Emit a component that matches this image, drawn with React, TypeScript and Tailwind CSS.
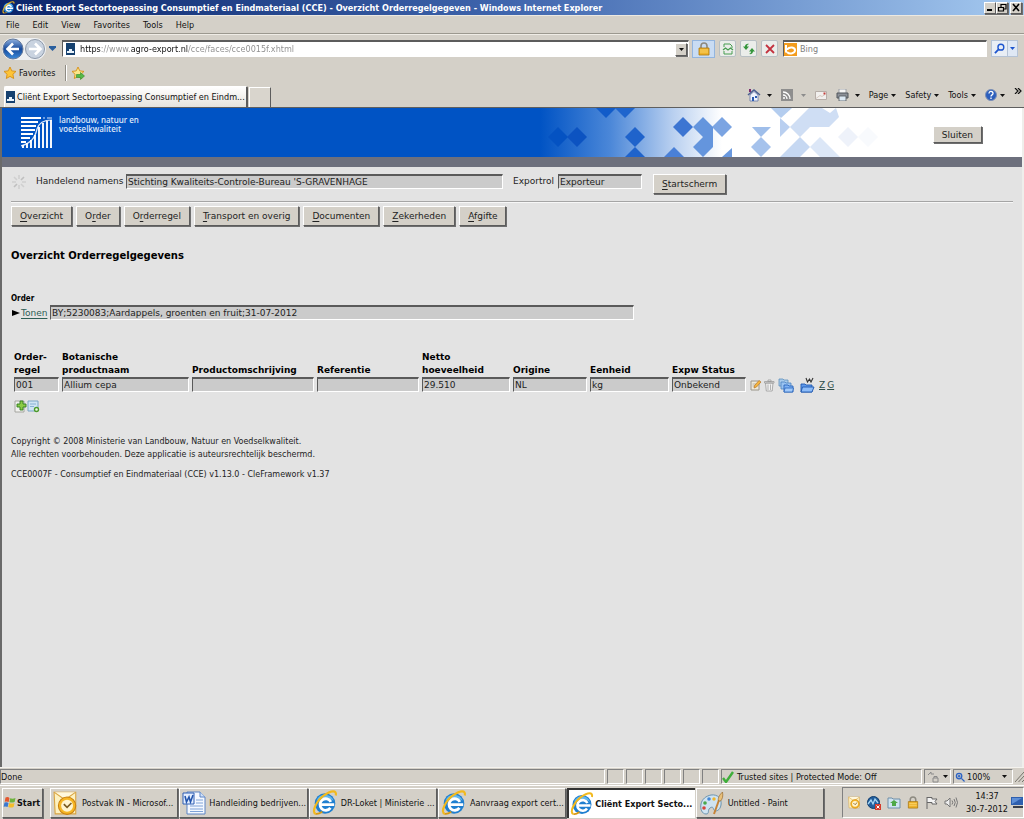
import * as React from "react"
import { clsx } from "clsx"

const raised =
  "border border-t-white border-l-white border-r-[#5c5c5c] border-b-[#5c5c5c] bg-[#d4d0c8] shadow-[1px_1px_0_#6e6e6e]"
const sunken = "border border-t-[#808080] border-l-[#808080] border-r-white border-b-white"

/* ---------- small drawings ---------- */

function IeLogo({ className }: { className?: string }) {
  return (
    <svg viewBox="0 0 24 24" className={className} aria-hidden="true">
      <circle cx="12" cy="12.5" r="9.5" fill="#1f7fd0" />
      <path d="M4 10a8.5 8.5 0 0 1 16 0c-4-3-11-4-16 0z" fill="#62b8ee" />
      <path d="M7.5 13.5h13M17 16.5a5.3 5.3 0 1 1 .4-5.5" fill="none" stroke="#fff" strokeWidth="2.6" />
      <path d="M3.5 22C-1 21 4 10 11 5S23 0 22 5" fill="none" stroke="#f2b91d" strokeWidth="2" />
      <path d="M3.5 22c2 .6 4-.6 6-2" fill="none" stroke="#d99a12" strokeWidth="1.6" />
    </svg>
  )
}

function SiteIcon() {
  return (
    <svg viewBox="0 0 9 12" className="h-3 w-[9px] shrink-0" aria-hidden="true">
      <path d="M0 0h9v12H0z" fill="#16416f" />
      <path d="M3 6h3v2h2v2H1V8h2z" fill="#e8f2fb" />
    </svg>
  )
}

function Star({ add }: { add?: boolean }) {
  return (
    <svg viewBox="0 0 14 14" className="h-[14px] w-[14px] shrink-0" aria-hidden="true">
      <path
        d="M7 1l1.8 3.9 4.2.5-3.1 2.9.8 4.2L7 10.4l-3.7 2.1.8-4.2L1 5.4l4.2-.5z"
        fill={add ? "#fbe68a" : "#fdc437"}
        stroke="#d78f14"
        strokeWidth=".9"
      />
      {add && <path d="M5.5 8.500h4V6.500L13.500 10 9.500 13.500v-2h-4z" fill="#55b948" stroke="#2f8a2a" strokeWidth=".6" />}
    </svg>
  )
}

function Caret({ className }: { className?: string }) {
  return (
    <svg viewBox="0 0 5 3" className={clsx("h-[3px] w-[5px] shrink-0", className)} aria-hidden="true">
      <path d="M0 0h5L2.500 3z" fill="currentColor" />
    </svg>
  )
}

function Lock({ className }: { className?: string }) {
  return (
    <svg viewBox="0 0 12 14" className={className} aria-hidden="true">
      <path d="M3 7V4a3 3 0 0 1 6 0v3" fill="none" stroke="#8d8a80" strokeWidth="1.600" />
      <path d="M1 6h10v7H1z" fill="#eeb32d" stroke="#a9770f" strokeWidth=".8" />
      <path d="M2 8h8M2 10h8" stroke="#fbd977" strokeWidth=".8" />
    </svg>
  )
}

function OrangeClock({ className }: { className?: string }) {
  return (
    <svg viewBox="0 0 24 24" className={className} aria-hidden="true">
      <path d="M1 2h20v20H2z" fill="#fdf1c0" stroke="#d9a441" />
      <path d="M1 2l10 7L21 2" fill="#fff8de" stroke="#d9a441" />
      <circle cx="13" cy="14.500" r="8" fill="#f6b625" stroke="#c9800f" />
      <circle cx="13" cy="14.500" r="5.500" fill="#fff4cf" />
      <path d="M10 13l3 3 4-4" fill="none" stroke="#7a5a20" strokeWidth="1.500" />
    </svg>
  )
}

function WordIcon() {
  return (
    <svg viewBox="0 0 24 24" className="h-6 w-6 shrink-0" aria-hidden="true">
      <path d="M5 1h13l5 5v17H5z" fill="#f4f8ff" stroke="#5c84c4" />
      <path d="M18 1v5h5" fill="#cfe0f8" stroke="#5c84c4" />
      <path d="M14 9h7M14 12h7M8 15h13M8 18h13M8 20.500h13" stroke="#7ea2d8" strokeWidth="1.200" />
      <path d="M1 2h11v11H1z" fill="#e5efff" stroke="#2f5fb3" />
      <path d="M3 5l1.500 6L7 6l1.500 5L11 4" fill="none" stroke="#2456ad" strokeWidth="1.600" />
    </svg>
  )
}

function PaintIcon() {
  return (
    <svg viewBox="0 0 26 26" className="h-[26px] w-[26px] shrink-0" aria-hidden="true">
      <path
        d="M12 5c7-1 11 4 10 10s-6 7-7 5-1-4-4-2 0 6-4 6S1 19 2 14s5-8 10-9z"
        fill="#cfe3f1"
        stroke="#6b93ae"
      />
      <circle cx="6" cy="13" r="1.800" fill="#4aa84a" />
      <circle cx="10" cy="9" r="1.800" fill="#4388d6" />
      <circle cx="15" cy="9" r="1.700" fill="#efb62c" />
      <circle cx="5" cy="18" r="1.800" fill="#d8453b" />
      <path d="M15 24l5-14" stroke="#c78337" strokeWidth="2" />
      <path d="M19.500 11c-1-3 1-6 4-9 .8 4 0 7-2 9z" fill="#e8c07a" stroke="#9a6a2d" strokeWidth=".7" />
    </svg>
  )
}

function WindowsFlag() {
  return (
    <svg viewBox="0 0 13 13" className="h-[13px] w-[13px] shrink-0" aria-hidden="true">
      <path d="M2.500 1.500Q5 .5 6.500 2L5.700 6Q4 5 1.700 5.700z" fill="#e4572e" />
      <path d="M7.200 2.200Q9.500 3.200 12.500 2l-.9 4Q9 7 6.400 6.200z" fill="#6fb33d" />
      <path d="M1.500 6.500Q4 5.600 5.500 7l-.9 4Q3 10 .6 10.700z" fill="#3b78cf" />
      <path d="M6.200 7Q9 8 11.500 7l-.9 4Q8 12 5.300 11z" fill="#f4bd2b" />
    </svg>
  )
}

function Folder({ variant }: { variant: "stack" | "word" }) {
  return (
    <svg viewBox="0 0 16 16" className="h-4 w-4" aria-hidden="true">
      {variant === "stack" ? (
        <>
          <path d="M1 2h4l1 1h4v6H1z" fill="#a9cbec" stroke="#5d8fbd" strokeWidth=".8" />
          <path d="M3 5h4l1 1h5v6H3z" fill="#9ac3f1" stroke="#4c83c0" strokeWidth=".8" />
          <path d="M6 8h4l1 1h4v6H6z" fill="#7eb2f4" stroke="#2a64bb" strokeWidth=".9" />
          <path d="M6 15l1-4h8.500l-1 4z" fill="#a2cafa" stroke="#2a64bb" strokeWidth=".8" />
        </>
      ) : (
        <>
          <path d="M2 7h4l1 1h6v7H2z" fill="#5f9aec" stroke="#1e57b0" strokeWidth=".9" />
          <path d="M2 15l1.500-5H15l-2 5z" fill="#8dbcf8" stroke="#1e57b0" strokeWidth=".9" />
          <path d="M7 1l1.500 4L10.500 2l1.500 3L14 1" fill="none" stroke="#333" strokeWidth="1.100" />
        </>
      )}
    </svg>
  )
}

function MinistryLogo() {
  const bars = [[2, 28], [6, 26], [10, 23], [14, 18], [18, 10], [22, 6], [26, 4], [30, 3]]
  return (
    <svg viewBox="0 0 31 31" className="mt-[9px] h-[31px] w-[31px] shrink-0" aria-hidden="true">
      <path
        d="M0 1h20M0 5h17M0 9h15M0 13h14M0 17h12M0 21h9M0 25h5"
        stroke="#fff"
        strokeWidth="1.800"
      />
      <path d="M0 29C10 26 14 21 16 12 18 5 23 3 31 3M22 1h2M26 1h5" fill="none" stroke="#dce8f8" strokeWidth="1.200" />
      {bars.map(([x, y]) => (
        <path key={x} d={`M${x} ${y}V31`} stroke="#fff" strokeWidth="1.900" />
      ))}
    </svg>
  )
}

function Mosaic() {
  const diamonds: [number, number, string][] = [
    [18, 29, "#0452c2"],
    [37, 29, "#0c53c1"],
    [66, 0, "#125cc9"],
    [85, 0, "#1f65cd"],
    [95, 29, "#1f63cb"],
    [95, 49, "#1f63cb"],
    [134, 49, "#4a80d7"],
    [143, 19, "#3c75d2"],
    [182, 19, "#7ba4e2"],
    [221, 39, "#a5c2ec"],
    [308, 29, "#eef2fa"],
    [328, 29, "#f8fafd"],
  ]
  return (
    <svg viewBox="0 0 350 49" className="h-[49px] w-[350px] shrink-0" aria-hidden="true">
      <defs>
        <linearGradient id="fade" x1="0" x2="1">
          <stop offset="0" stopColor="#0053c4" />
          <stop offset=".2" stopColor="#4b87d8" />
          <stop offset=".38" stopColor="#b9d0f0" />
          <stop offset=".52" stopColor="#fff" />
        </linearGradient>
      </defs>
      <path d="M0 0h350v49H0z" fill="url(#fade)" />
      {diamonds.map(([x, y, fill]) => (
        <path key={`${x}-${y}`} d={`M${x - 10} ${y}l10-10 10 10-10 10z`} fill={fill} />
      ))}
      <path d="M153 19l10-10 10 10v20l-10 10-10-10 10-10z" fill="#6495dd" />
      <path d="M182 49l10-9v9z" fill="#6a99df" />
      <path d="M212 19h19l-10 10z" fill="#9fbeea" />
      <path d="M231 0h21l-11 10z" fill="#b4cdef" />
      <path d="M240 10l10 9-10 10z" fill="#b9cff0" />
      <path d="M250 19L269 0h13l8 5 6-5 3 9-10 10h-19l-10 10z" fill="#cfdef4" />
      <path d="M240 49l20-20 10 10-10 10z" fill="#c6d8f2" />
      <path d="M270 39l10-10 20 20h-20z" fill="#dce7f7" />
    </svg>
  )
}

/* ---------- browser window ---------- */

function TitleBar() {
  const controls = [
    { label: "Minimize", d: "M2 7h5", w: 2 },
    { label: "Restore", d: "M4 4V1.500h5V6H7M1.500 4.500h5V8h-5z", w: 1.2 },
    { label: "Close", d: "M2 1l6 7M8 1L2 8", w: 1.6 },
  ]
  return (
    <header className="flex h-[15px] items-center bg-linear-to-r from-[#0a246a] via-[#4066ae] to-[#a6caf0] pl-[2px] text-white">
      <IeLogo className="h-[13px] w-[13px]" />
      <h1 className="ml-px flex-1 truncate font-bold">
        Cliënt Export Sectortoepassing Consumptief en Eindmateriaal (CCE) - Overzicht Orderregelgegeven - Windows Internet Explorer
      </h1>
      {controls.map((c) => (
        <button key={c.label} aria-label={c.label} className={clsx("flex h-3 w-3 items-center justify-center last:mr-[2px] last:ml-[2px]", raised)}>
          <svg viewBox="0 0 10 10" className="h-[10px] w-[10px]">
            <path d={c.d} fill="none" stroke="#000" strokeWidth={c.w} />
          </svg>
        </button>
      ))}
    </header>
  )
}

function MenuBar() {
  return (
    <nav className="flex h-[19px] items-center gap-[13px] border-t border-b border-t-[#ece9e2] border-b-[#9b988f] pt-px pl-[6px]">
      {["File", "Edit", "View", "Favorites", "Tools", "Help"].map((m) => (
        <button key={m}>{m}</button>
      ))}
    </nav>
  )
}

const toolButton = "flex h-[17px] w-[17px] items-center justify-center rounded-xs border border-[#b8c0c4] bg-[#ebedea]"

function AddressBar() {
  return (
    <div className="flex h-7 items-center border-t border-t-[#efece6] pr-[6px] pl-[2px]">
      <div className="flex rounded-full bg-[#eef0f2]">
        <button aria-label="Back">
          <svg viewBox="0 0 22 22" className="h-[22px] w-[22px]">
            <defs>
              <linearGradient id="back" x2="0" y2="1">
                <stop offset="0" stopColor="#8fb0df" />
                <stop offset=".5" stopColor="#174a9b" />
                <stop offset="1" stopColor="#3a8bdc" />
              </linearGradient>
            </defs>
            <circle cx="11" cy="11" r="10" fill="url(#back)" stroke="#63789a" />
            <path d="M17 11H6M11 5.500L5.500 11l5.500 5.500" fill="none" stroke="#fff" strokeWidth="2.600" />
          </svg>
        </button>
        <button aria-label="Forward">
          <svg viewBox="0 0 22 22" className="h-[22px] w-[22px]">
            <circle cx="11" cy="11" r="9.500" fill="#c9d3e0" stroke="#8d99aa" />
            <path d="M5 11h11M11 5.500l5.500 5.500-5.500 5.500" fill="none" stroke="#fff" strokeWidth="2.600" />
          </svg>
        </button>
      </div>
      <button aria-label="Recent pages" className="ml-[3px] flex text-[#2a5f9e]">
        <svg viewBox="0 0 7 5" className="h-[5px] w-[7px]">
          <path d="M0 0h7v1.500L3.500 5 0 1.500z" fill="currentColor" />
        </svg>
      </button>
      <div className="ml-[6px] flex h-[17px] min-w-0 flex-1 items-center border border-t-2 border-t-[#5c5c5c] border-r-white border-b-white border-l-[#5c5c5c] bg-white pl-[3px]">
        <SiteIcon />
        <input
          aria-label="Address"
          defaultValue="https://www.agro-export.nl/cce/faces/cce0015f.xhtml"
          className="ml-[5px] min-w-0 flex-1 bg-[linear-gradient(90deg,#111_21px,#8c8c8c_21px,#8c8c8c_51px,#111_51px,#111_108px,#8c8c8c_108px)] bg-clip-text leading-3 text-transparent outline-none"
        />
        <button aria-label="Show addresses" className={clsx("mr-px flex h-[13px] w-3 items-center justify-center", raised)}>
          <Caret />
        </button>
      </div>
      <button aria-label="Security report" className="ml-[3px] flex h-[18px] w-[23px] items-center justify-center border border-[#93b5de] bg-[#c9dcf3]">
        <Lock className="h-[14px] w-3" />
      </button>
      <button aria-label="Compatibility view" className={clsx("ml-1", toolButton)}>
        <svg viewBox="0 0 12 12" className="h-3 w-3" fill="none" stroke="#479d50">
          <path d="M2 4V1h6l2 2v2M2 8v3h8V8" />
          <path d="M1 7l2.500-2L6 7l2.500-2L11 7" strokeWidth="1.300" />
        </svg>
      </button>
      <button aria-label="Refresh" className={clsx("ml-1", toolButton)}>
        <svg viewBox="0 0 12 12" className="h-3 w-3" fill="#35963c">
          <path d="M3 7L0 3.500h2C2 1.500 4 .5 6 1 4.500 1.500 4 2.500 4 3.500h2z" />
          <path d="M9 5l3 3.500h-2c0 2-2 3-4 2.500 1.500-.5 2-1.500 2-2.500H6z" />
        </svg>
      </button>
      <button aria-label="Stop" className={clsx("ml-1", toolButton)}>
        <svg viewBox="0 0 12 12" className="h-3 w-3">
          <path d="M2 2l8 8M10 2l-8 8" stroke="#c3323f" strokeWidth="1.800" />
        </svg>
      </button>
      <div className="ml-[5px] flex h-[17px] w-[204px] items-center border border-t-2 border-t-[#5c5c5c] border-r-white border-b-white border-l-[#5c5c5c] bg-white">
        <svg viewBox="0 0 13 13" className="h-[13px] w-[13px] shrink-0" aria-hidden="true">
          <path d="M0 0h13v13H0z" fill="#f39c1e" />
          <path d="M2 2v7.500M3 6.500C6 3 11 4.500 11 7.300S6 12 3 9" fill="none" stroke="#fff" strokeWidth="2" />
        </svg>
        <input
          aria-label="Search"
          placeholder="Bing"
          className="ml-[3px] min-w-0 flex-1 leading-3 outline-none placeholder:text-[#808080]"
        />
      </div>
      <button aria-label="Search" className="ml-1 flex h-[17px] w-[17px] items-center justify-center border border-[#b5c3d6] bg-[#e9eef5]">
        <svg viewBox="0 0 12 12" className="h-[11px] w-[11px]" fill="none" stroke="#1d55cf">
          <circle cx="7.500" cy="4.500" r="3.200" strokeWidth="1.500" />
          <path d="M5 7l-4 4" strokeWidth="2" />
        </svg>
      </button>
      <button aria-label="Search options" className="flex h-[17px] w-[10px] items-center justify-center border border-l-0 border-[#b5c3d6] bg-[#dfe8f5] text-[#1d55cf]">
        <Caret />
      </button>
    </div>
  )
}

function FavoritesBar() {
  return (
    <div className="flex h-[22px] items-center pl-[3px]">
      <button className="flex items-center gap-[2px]">
        <Star />
        Favorites
      </button>
      <span className="ml-[9px] h-4 border-r border-l border-r-white border-l-[#8f8c84]" />
      <button aria-label="Add to Favorites Bar" className="ml-1">
        <Star add />
      </button>
    </div>
  )
}

function MenuButton({ label, children }: { label: string; children?: React.ReactNode }) {
  return (
    <button aria-label={label} className="flex items-center gap-[3px]">
      {children ?? label}
      <Caret />
    </button>
  )
}

function TabRow() {
  return (
    <div className="flex h-6 items-end border-b border-b-[#5f5f5f] pl-1">
      <button className="flex h-[21px] items-center gap-[2px] rounded-t-xs border-t border-r-2 border-l border-t-white border-r-[#5c5c5c] border-l-white bg-linear-to-b from-white to-[#e6e3dc] px-px">
        <SiteIcon />
        <span className="whitespace-nowrap">Cliënt Export Sectortoepassing Consumptief en Eindm...</span>
      </button>
      <button aria-label="New tab" className="ml-px h-5 w-[22px] border-t border-r border-l border-t-white border-r-[#5c5c5c] border-l-white bg-[#d9d5cd]" />
      <div className="mb-[3px] ml-auto flex h-[18px] items-center gap-[9px] pr-[2px]">
        <MenuButton label="Home">
          <svg viewBox="0 0 14 14" className="mr-[3px] h-[14px] w-[14px]">
            <path d="M1 7l6-5 6 5" fill="none" stroke="#4b5f91" strokeWidth="1.600" />
            <path d="M3 7l4-3.500L11 7v6H3z" fill="#eef2fb" stroke="#6277a8" strokeWidth=".8" />
            <path d="M2 1h2v3H2z" fill="#7d2b6d" />
            <path d="M5 9h2v4H5zM8 8h2v2H8z" fill="#2c5bb0" />
          </svg>
        </MenuButton>
        <div className="flex items-center gap-2 text-[#8c8c8c]">
          <button aria-label="Feeds">
            <svg viewBox="0 0 12 12" className="block h-3 w-3" fill="none">
              <path d="M0 0h12v12H0z" fill="#8e8e8e" />
              <path d="M2 3a7 7 0 0 1 7 7M2 6a4 4 0 0 1 4 4" stroke="#fff" strokeWidth="1.300" />
              <circle cx="3" cy="9" r="1" fill="#fff" />
            </svg>
          </button>
          <Caret />
        </div>
        <button aria-label="Read mail">
          <svg viewBox="0 0 12 9" className="block h-[9px] w-3">
            <path d="M.5.5h11v8H.5z" fill="#f2f0ee" stroke="#b7aea8" />
            <path d="M1 7.500l4-3 2 1 3-2" fill="none" stroke="#d7c9c0" />
            <path d="M8.500 1.500h2v2h-2z" fill="#c4403d" />
          </svg>
        </button>
        <MenuButton label="Print">
          <svg viewBox="0 0 13 12" className="mr-[3px] h-3 w-[13px]">
            <path d="M3 0h7v5H3z" fill="#f6f6f6" stroke="#8d9399" strokeWidth=".8" />
            <path d="M1 4h11v5H1z" fill="#8c9198" stroke="#50565c" />
            <path d="M3 7h7v5H3z" fill="#dce9f4" stroke="#50565c" strokeWidth=".8" />
          </svg>
        </MenuButton>
        <MenuButton label="Page" />
        <MenuButton label="Safety" />
        <MenuButton label="Tools" />
        <MenuButton label="Help">
          <svg viewBox="0 0 12 12" className="h-3 w-3">
            <circle cx="6" cy="6" r="5.500" fill="#2c5fbd" stroke="#7c8fb5" />
            <path d="M4 4.500c0-3 4-2.500 4 0C8 6 6 5.800 6 7.500M6 8.500V10" fill="none" stroke="#fff" strokeWidth="1.300" />
          </svg>
        </MenuButton>
        <button aria-label="More commands" className="mb-2">
          <svg viewBox="0 0 8 6" className="h-[6px] w-2" fill="none" stroke="#111" strokeWidth="1.200">
            <path d="M1 0l3 3-3 3M4 0l3 3-3 3" />
          </svg>
        </button>
      </div>
    </div>
  )
}

/* ---------- page ---------- */

function PageButton({ text, access, className }: { text: string; access?: string; className?: string }) {
  const at = access ? text.indexOf(access) : -1
  return (
    <button className={clsx("px-2 whitespace-nowrap", raised, className ?? "h-5")}>
      {at < 0 ? (
        text
      ) : (
        <>
          {text.slice(0, at)}
          <u className="underline-offset-2">{access}</u>
          {text.slice(at + 1)}
        </>
      )}
    </button>
  )
}

function Field({ className, ...props }: React.InputHTMLAttributes<HTMLInputElement>) {
  return (
    <input
      readOnly
      className={clsx(
        "block h-[15px] min-w-0 border border-t-2 border-t-[#5a5a5a] border-r-white border-b-white border-l-[#5a5a5a] bg-[#cbcbcb] px-px leading-3 text-[#222] outline-none",
        className,
      )}
      {...props}
    />
  )
}

function Banner() {
  return (
    <div className="flex h-[59px] border-b-[10px] border-b-[#6d707d] bg-white">
      <div className="flex flex-1 bg-[#0053c4] pl-[19px]">
        <MinistryLogo />
        <p className="mt-[7px] ml-[7px] font-['Noto_Sans',sans-serif] text-[8px] leading-[9px] font-medium text-[#e2ecfa]">
          landbouw, natuur en
          <br />
          voedselkwaliteit
        </p>
      </div>
      <Mosaic />
      <div className="flex w-[132px] justify-end pt-[18px] pr-10">
        <PageButton text="Sluiten" className="h-[17px] leading-3" />
      </div>
    </div>
  )
}

const menu = [
  { text: "Overzicht", access: "O" },
  { text: "Order", access: "r" },
  { text: "Orderregel", access: "r" },
  { text: "Transport en overig", access: "T" },
  { text: "Documenten", access: "D" },
  { text: "Zekerheden", access: "Z" },
  { text: "Afgifte", access: "A" },
]

const columns = [
  { lines: ["Order-", "regel"], value: "001", width: "w-[48px]" },
  { lines: ["Botanische", "productnaam"], value: "Allium cepa", width: "w-[130px]" },
  { lines: ["Productomschrijving"], value: "", width: "w-[125px]" },
  { lines: ["Referentie"], value: "", width: "w-[105px]" },
  { lines: ["Netto", "hoeveelheid"], value: "29.510", width: "w-[91px]" },
  { lines: ["Origine"], value: "NL", width: "w-[77px]" },
  { lines: ["Eenheid"], value: "kg", width: "w-[82px]" },
  { lines: ["Expw Status"], value: "Onbekend", width: "w-[77px]" },
]

function OrderTable() {
  return (
    <table className="mt-[31px] ml-[3px] table-fixed border-collapse text-left">
      <thead>
        <tr className="align-bottom">
          {columns.map((c) => (
            <th key={c.lines[0]} scope="col" className={clsx("p-0 leading-[13px] font-bold whitespace-nowrap text-black", c.width)}>
              {c.lines.map((line) => (
                <span key={line} className="block">
                  {line}
                </span>
              ))}
            </th>
          ))}
          <td className="w-[90px]" />
        </tr>
      </thead>
      <tbody>
        <tr className="align-top">
          {columns.map((c) => (
            <td key={c.lines[0]} className="p-0 pr-[3px]">
              <Field aria-label={c.lines.join(" ")} value={c.value} className="w-full" />
            </td>
          ))}
          <td className="p-0">
            <div className="flex items-center">
              <button aria-label="Wijzigen">
                <svg viewBox="0 0 13 13" className="block h-[13px] w-[13px]">
                  <path d="M2 2h8v9H2z" fill="#eee9da" stroke="#9a958a" />
                  <path d="M3.500 5h4M3.500 7h3" stroke="#b9b4a6" />
                  <path d="M5 9l.6-2.500L10 1.500l2 1.500-4.500 5z" fill="#f5b63d" stroke="#b5742a" strokeWidth=".7" />
                </svg>
              </button>
              <button aria-label="Verwijderen">
                <svg viewBox="0 0 13 13" className="ml-px block h-[13px] w-[13px]" stroke="#9a9a9a" fill="#f0f0f0">
                  <path d="M2.500 4h7.500l-.8 8H3.300zM1.500 2.500h9.500V4H1.500zM5 1h3v1.500H5z" strokeWidth=".8" />
                  <path d="M5 5.500V11M7.500 5.500V11" strokeWidth=".7" />
                </svg>
              </button>
              <button aria-label="Kopiëren" className="ml-[2px]">
                <Folder variant="stack" />
              </button>
              <button aria-label="Waarmerken" className="ml-[5px]">
                <Folder variant="word" />
              </button>
              <a href="#z" className="ml-1 text-[#2d4d48] underline">Z</a>
              <a href="#g" className="ml-[2px] text-[#2d4d48] underline">G</a>
            </div>
          </td>
        </tr>
      </tbody>
    </table>
  )
}

function Page() {
  return (
    <main className="flex-1 border-r-2 border-l-2 border-r-[#efeeeb] border-l-[#6a6a6a] bg-[#e3e3e3] font-['DejaVu_Sans',sans-serif] text-[#222]">
      <Banner />
      <div className="px-[9px]">
        <div className="flex items-start border-b border-b-[#a5a5a5] pt-[7px] pb-[7px] shadow-[0_1px_0_#f7f7f7]">
          <svg viewBox="0 0 16 16" className="h-4 w-4" stroke="#bfbfbf" strokeWidth="1.600" aria-hidden="true">
            <path d="M8 1v4M8 11v4M1 8h4M11 8h4M3 3l3 3M10 10l3 3" stroke="#cfcfcf" />
            <path d="M13 3l-3 3M6 10l-3 3" />
          </svg>
          <label htmlFor="namens" className="ml-[9px] w-[90px] leading-[14px] whitespace-nowrap">Handelend namens</label>
          <Field id="namens" value="Stichting Kwaliteits-Controle-Bureau 'S-GRAVENHAGE" className="w-[377px]" />
          <label htmlFor="rol" className="ml-[10px] w-[45px] leading-[14px]">Exportrol</label>
          <Field id="rol" value="Exporteur" className="mr-[11px] w-[84px]" />
          <PageButton text="Startscherm" access="S" />
        </div>

        <nav className="mt-1 flex gap-1">
          {menu.map((item) => (
            <PageButton key={item.text} {...item} />
          ))}
        </nav>

        <h2 className="mt-[22px] text-[10px] leading-4 font-bold text-black">Overzicht Orderregelgegevens</h2>

        <div className="mt-[29px] font-['DejaVu_Sans_Condensed','DejaVu_Sans',sans-serif] text-[8px] leading-3 font-bold text-black">Order</div>
        <div className="flex items-center">
          <a href="#tonen" className="flex w-[39px] items-center text-[#2d5d55] underline underline-offset-2">
            <svg viewBox="0 0 8 8" className="mx-px h-2 w-2" aria-hidden="true">
              <path d="M0 1l8 3-8 3z" fill="#000" />
            </svg>
            Tonen
          </a>
          <Field aria-label="Order" value="BY;5230083;Aardappels, groenten en fruit;31-07-2012" className="w-[584px]" />
        </div>

        <OrderTable />

        <div className="mt-[7px] ml-[3px] flex">
          <button aria-label="Toevoegen">
            <svg viewBox="0 0 13 13" className="h-[13px] w-[13px]">
              <path d="M1 1h9v11H1z" fill="#f1f1ee" stroke="#a5a5a0" />
              <path d="M6 1h3v3h3v3H9v3H6V7H3V4h3z" fill="#8bcb45" stroke="#2f7d1e" strokeWidth=".9" />
            </svg>
          </button>
          <button aria-label="Meerdere toevoegen">
            <svg viewBox="0 0 13 13" className="h-[13px] w-[13px]">
              <path d="M1 1h10v10H1z" fill="#cfe4f4" stroke="#7aa6c6" />
              <path d="M3 4h6M3 6.500h4" stroke="#86b2d3" />
              <circle cx="9.500" cy="9.500" r="2" fill="#eef8e6" stroke="#4c9a2c" strokeWidth="1.400" />
            </svg>
          </button>
        </div>

        <footer className="mt-[22px] text-[8px] leading-[13px]">
          <p>Copyright © 2008 Ministerie van Landbouw, Natuur en Voedselkwaliteit.</p>
          <p>Alle rechten voorbehouden. Deze applicatie is auteursrechtelijk beschermd.</p>
          <p className="mt-[7px]">CCE0007F - Consumptief en Eindmateriaal (CCE) v1.13.0 - CleFramework v1.37</p>
        </footer>
      </div>
    </main>
  )
}

/* ---------- status bar and task bar ---------- */

function StatusBar() {
  return (
    <div className="flex h-[18px] gap-[2px] border-t border-t-[#f4f2ee] pt-px pb-px">
      <div className={clsx("flex flex-1 items-center", sunken)}>Done</div>
      {[0, 1, 2, 3, 4, 5].map((n) => (
        <div key={n} className={clsx("w-[17px]", sunken)} />
      ))}
      <div className={clsx("flex w-[201px] items-center gap-[3px] whitespace-nowrap", sunken)}>
        <svg viewBox="0 0 12 12" className="h-3 w-3" aria-hidden="true">
          <path d="M1 7l3 4 7-10" fill="none" stroke="#3fae3a" strokeWidth="2.400" />
        </svg>
        Trusted sites | Protected Mode: Off
      </div>
      <button aria-label="InPrivate filtering" className={clsx("flex w-[27px] items-center justify-center gap-1", sunken)}>
        <svg viewBox="0 0 12 12" className="h-3 w-3" fill="none" stroke="#8a8a8a">
          <path d="M1 4l3-3v2h3M6 11h5V7H6zM7 7V5.500h3V7" />
        </svg>
        <Caret />
      </button>
      <button className={clsx("flex w-[60px] items-center gap-[2px] pl-px", sunken)}>
        <svg viewBox="0 0 11 11" className="h-[10px] w-[10px]" fill="none" stroke="#2b62c4">
          <circle cx="4.500" cy="4.500" r="3" strokeWidth="1.400" />
          <path d="M7 7l3.500 3.500M3 4.500h3M4.500 3v3" strokeWidth="1.400" />
        </svg>
        100%
        <Caret className="ml-[10px]" />
      </button>
      <svg viewBox="0 0 9 12" className="h-[14px] w-[9px]" stroke="#77746c" aria-hidden="true">
        <path d="M0 12L9 2M3.500 12L9 6M7 12l2-2" />
      </svg>
    </div>
  )
}

const tasks = [
  { title: "Postvak IN - Microsof...", icon: <OrangeClock className="h-[26px] w-[26px] shrink-0" /> },
  { title: "Handleiding bedrijven...", icon: <WordIcon /> },
  { title: "DR-Loket | Ministerie ...", icon: <IeLogo className="h-[26px] w-[26px] shrink-0" /> },
  { title: "Aanvraag export cert...", icon: <IeLogo className="h-[26px] w-[26px] shrink-0" /> },
  { title: "Cliënt Export Secto...", icon: <IeLogo className="h-6 w-6 shrink-0" />, active: true },
  { title: "Untitled - Paint", icon: <PaintIcon /> },
]

function TaskBar() {
  return (
    <footer className="flex h-[34px] items-center border-t border-t-white pl-[2px]">
      <button className={clsx("flex h-[30px] w-[41px] items-center gap-px font-bold", raised)}>
        <WindowsFlag />
        Start
      </button>
      <div className="ml-[7px] flex min-w-0 flex-1 gap-px">
        {tasks.map((t) => (
          <button
            key={t.title}
            className={clsx(
              "flex h-[30px] min-w-0 flex-1 items-center whitespace-nowrap",
              t.active
                ? "gap-px border-t-2 border-l-2 border-[#333] bg-white pl-px font-bold"
                : "gap-[3px] pl-[2px]",
              !t.active && raised,
            )}
          >
            {t.icon}
            {t.title}
          </button>
        ))}
      </div>
      <div className={clsx("ml-[18px] flex h-[31px] w-[182px] items-center gap-[6px] pl-[5px]", sunken)}>
        <OrangeClock className="h-[13px] w-[13px]" />
        <svg viewBox="0 0 14 14" className="h-[14px] w-[14px]" aria-hidden="true">
          <circle cx="6.500" cy="6.500" r="6" fill="#225f9e" stroke="#113c6c" />
          <path d="M1 8l3-4 2 4 2-5 3 4" fill="none" stroke="#a9d7f5" strokeWidth="1.300" />
          <path d="M8 8h6v6H8z" fill="#d43a2c" />
          <path d="M9.500 9.500l3 3M12.500 9.500l-3 3" stroke="#fff" />
        </svg>
        <svg viewBox="0 0 14 12" className="h-3 w-[14px]" aria-hidden="true">
          <path d="M1 1h4l1 1h7v9H1z" fill="#cfe3f1" stroke="#6f8fa9" />
          <path d="M3 6l4-3 4 3H9v3H5V6z" fill="#4da847" />
        </svg>
        <Lock className="h-[13px] w-3" />
        <svg viewBox="0 0 13 13" className="h-[13px] w-[13px]" fill="#f4f4f4" stroke="#666" aria-hidden="true">
          <path d="M2 1v12M2 1.500h5v1.500h5l-2 2.500 2 2.500H7V6.500H2" />
        </svg>
        <svg viewBox="0 0 14 13" className="h-[13px] w-[14px]" fill="none" stroke="#777" aria-hidden="true">
          <path d="M1 5h2l3-3v9L3 8H1z" fill="#eee" />
          <path d="M8 4.500q1.500 2 0 4M10 3q2.500 3.500 0 7M12 1.500q3 5 0 10" />
        </svg>
        <time className="ml-auto text-center leading-[13px] whitespace-nowrap">
          14:37
          <br />
          30-7-2012
        </time>
        <svg viewBox="0 0 12 11" className="-ml-[3px] h-[11px] w-3" aria-hidden="true">
          <path d="M0 0h12v8H0z" fill="#2f5fae" />
          <path d="M1 1h10L1 7z" fill="#5e8fd6" />
          <path d="M2 9h10v2H2z" fill="#3a3f4b" />
        </svg>
      </div>
    </footer>
  )
}

export default function App() {
  return (
    <div className="flex min-h-screen flex-col bg-[#d4d0c8] font-['DejaVu_Sans_Condensed','DejaVu_Sans',sans-serif] text-[9px] leading-3 text-[#111]">
      <TitleBar />
      <MenuBar />
      <AddressBar />
      <FavoritesBar />
      <TabRow />
      <Page />
      <StatusBar />
      <TaskBar />
    </div>
  )
}
